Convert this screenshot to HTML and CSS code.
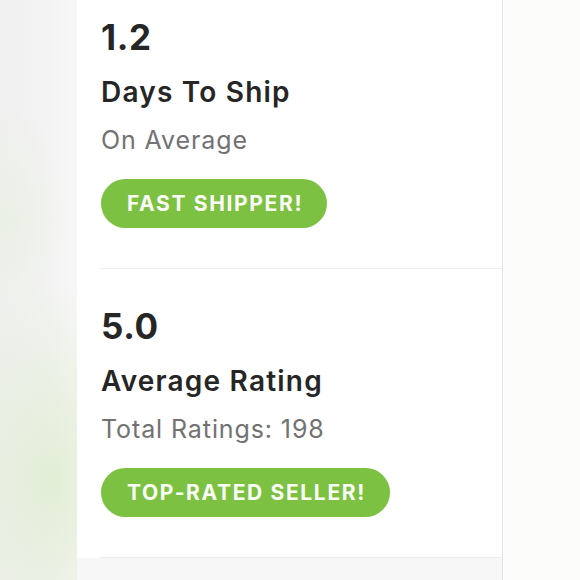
FILE: index.html
```html
<!DOCTYPE html>
<html>
<head>
<meta charset="utf-8">
<link rel="stylesheet" href="styles.css">
</head>
<body>
<div class="page">
  <div class="side side-left"></div>
  <main class="card">
    <section class="stat">
      <div class="num">1.2</div>
      <div class="label">Days To Ship</div>
      <div class="sub">On Average</div>
      <div class="badge">FAST SHIPPER!</div>
    </section>
    <section class="stat">
      <div class="num">5.0</div>
      <div class="label">Average Rating</div>
      <div class="sub">Total Ratings: 198</div>
      <div class="badge">TOP-RATED SELLER!</div>
    </section>
    <div class="card-foot"></div>
  </main>
  <div class="side side-right"></div>
</div>
</body>
</html>
```
FILE: styles.css
```css
html, body {
  margin: 0;
  padding: 0;
  height: 100%;
  overflow: hidden;
}
body {
  font-family: Inter, "Noto Sans", "Liberation Sans", sans-serif;
  background: #fbfbfb;
}
.page {
  display: grid;
  grid-template-columns: 77px 426px 1fr;
  height: 580px;
}
.side-left {
  background:
    radial-gradient(ellipse 110px 200px at 50px 480px, rgba(220, 236, 204, 0.75), rgba(220, 236, 204, 0) 100%),
    radial-gradient(ellipse 60px 120px at 10px 220px, rgba(230, 240, 220, 0.5), rgba(230, 240, 220, 0) 100%),
    linear-gradient(90deg, #f0f0f0 0%, #f3f3f3 60%, #f7f7f7 100%);
}
.side-right {
  background: #fcfcfb;
}
.card {
  background: #ffffff;
  border-right: 1px solid #e4e4e4;
  display: flex;
  flex-direction: column;
  margin-top: -20px;
}
.stat {
  margin-left: 23px;
  padding: 37px 0 40px 1px;
  border-bottom: 1px solid #efefea;
  display: flex;
  flex-direction: column;
  align-items: flex-start;
}
.num {
  font-size: 35px;
  line-height: 40px;
  font-weight: 700;
  color: #262626;
  letter-spacing: 0.6px;
}
.label {
  margin-top: 18px;
  font-size: 28px;
  line-height: 34px;
  font-weight: 600;
  color: #262626;
  letter-spacing: 1.2px;
}
.sub {
  margin-top: 16px;
  font-size: 25px;
  line-height: 30px;
  color: #727272;
  letter-spacing: 0.9px;
}
.badge {
  margin-top: 24px;
  height: 49px;
  line-height: 49px;
  padding: 0 24px 0 26px;
  border-radius: 25px;
  background: #7dc143;
  color: #fbfdf7;
  font-size: 21px;
  font-weight: 700;
  letter-spacing: 1.65px;
}
.card-foot {
  flex: 1;
  background: #f7f7f7;
}
```
